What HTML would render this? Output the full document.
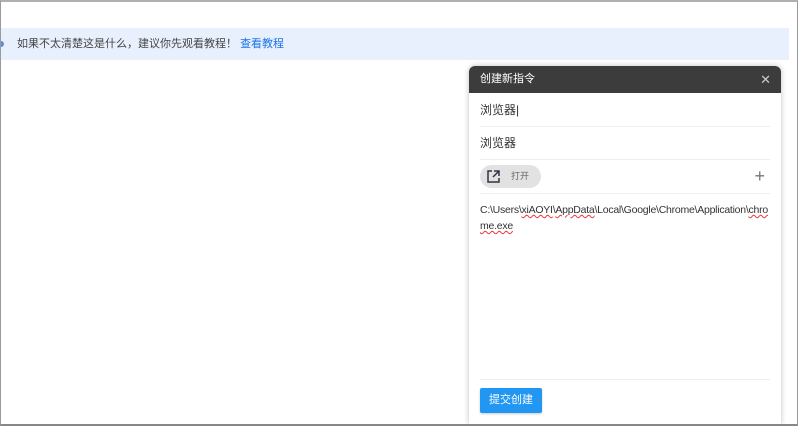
<!DOCTYPE html>
<html><head><meta charset="utf-8"><style>
*{margin:0;padding:0;box-sizing:border-box}
body{width:800px;height:426px;background:#fff;position:relative;overflow:hidden;font-family:"Liberation Sans","Noto Sans CJK SC",sans-serif;}
.frame{position:absolute;left:0;top:0;width:798px;height:426px;border-top:2px solid #b0b0b0;border-left:1px solid #9a9a9a;border-right:1px solid #9a9a9a;border-bottom:2px solid #888;z-index:5;pointer-events:none}
.banner{position:absolute;left:1px;top:28px;width:788px;height:32px;background:#e8f0fd;font-size:11px;color:#444;line-height:32px;padding-left:16px}
.banner a{color:#1a73e8;text-decoration:none}
.dot{position:absolute;left:-3px;top:13px;width:6px;height:6px;border-radius:50%;background:#5a8fd8}
.panel{position:absolute;left:469px;top:66px;width:312px;height:358px;background:#fff;border-radius:6px 6px 0 0;box-shadow:0 0 6px rgba(0,0,0,.25)}
.hd{height:27px;background:#3c3c3c;border-radius:6px 6px 0 0;color:#fff;font-size:11px;line-height:27px;padding-left:11px;position:relative}
.x{position:absolute;right:10px;top:0;color:#ccc;font-size:13px;font-weight:300}
.row{margin:0 11px;border-bottom:1px solid #eee;font-size:12px;color:#333}
.r1{height:34px;line-height:34px}
.r2{height:33px;line-height:33px}
.r3{height:34px;position:relative}
.pill{position:absolute;left:0;top:5px;width:61px;height:23px;background:#e2e2e2;border-radius:12px;font-size:9px;color:#666;line-height:23px;padding-left:31px}
.pill svg{position:absolute;left:7px;top:5px}
.plus{position:absolute;right:5px;top:6px;font-size:18px;color:#777;line-height:20px}
.path{margin:8px 11px 0;font-size:10.5px;letter-spacing:-0.25px;color:#333;line-height:16px;word-break:break-all;height:178px}
.u{text-decoration:underline wavy #e33;text-decoration-thickness:1px}
.sep{margin:0 11px;border-top:1px solid #eee}
.btn{position:absolute;left:11px;top:322px;width:62px;height:25px;background:#2196f3;color:#fff;font-size:11px;line-height:25px;text-align:center;border-radius:2px;box-shadow:0 1px 2px rgba(0,0,0,.2)}
</style></head><body>
<div class="frame"></div>
<div class="banner"><span class="dot"></span>如果不太清楚这是什么，建议你先观看教程！ <a>查看教程</a></div>
<div class="panel">
<div class="hd">创建新指令<span class="x">✕</span></div>
<div class="row r1">浏览器|</div>
<div class="row r2">浏览器</div>
<div class="row r3"><div class="pill"><svg width="13" height="13" viewBox="0 0 13 13" fill="none" stroke="#334" stroke-width="1.5"><path d="M5 1H1v11h11V8"/><path d="M7 1h5v5M12 1L6 7"/></svg>打开</div><span class="plus">+</span></div>
<div class="path">C:\Users\<span class="u">xiAOYI</span>\<span class="u">AppData</span>\Local\Google\Chrome\Application\<span class="u">chrome.exe</span></div>
<div class="sep" style="position:absolute;top:313px;left:0;right:0"></div>
<div class="btn">提交创建</div>
</div>
</body></html>
